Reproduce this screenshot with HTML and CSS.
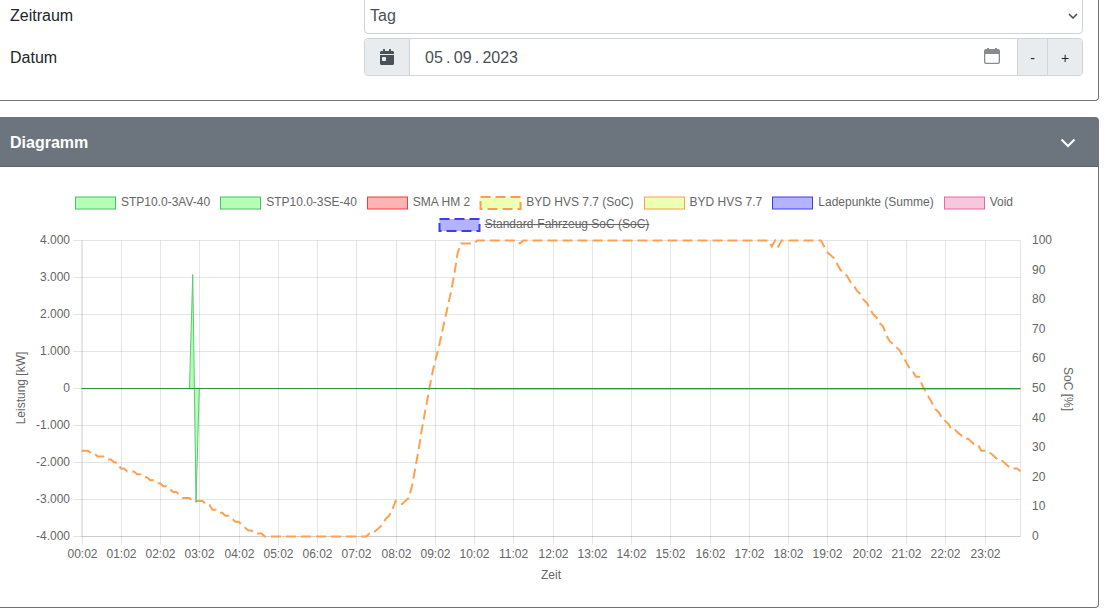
FILE: index.html
```html
<!DOCTYPE html>
<html lang="de">
<head>
    <meta charset="UTF-8">
    <meta name="viewport" content="width=device-width, initial-scale=1.0">
    <title>Diagramm</title>
    <link rel="stylesheet" href="styles.css">
</head>
<body>
    <main>
        <!-- Filter -->
        <section class="card filter">
            <div class="form-row">
                <label for="range">Zeitraum</label>
                <div class="select-wrap">
                    <select id="range">
                        <option>Tag</option>
                        <option>Monat</option>
                        <option>Jahr</option>
                    </select>
                    <svg class="select-arrow" width="10" height="6" viewBox="0 0 10 6"><path d="M1 1l4 4 4-4" fill="none" stroke="#495057" stroke-width="1.6"/></svg>
                </div>
            </div>
            <div class="form-row">
                <label for="date">Datum</label>
                <div class="input-group">
                    <span class="addon">
                        <svg width="14" height="16" viewBox="0 0 448 512"><path fill="#495057" d="M0 464c0 26.5 21.5 48 48 48h352c26.5 0 48-21.5 48-48V192H0v272zm64-192c0-8.8 7.2-16 16-16h96c8.800 0 16 7.200 16 16v96c0 8.800-7.200 16-16 16H80c-8.800 0-16-7.200-16-16v-96zM400 64h-48V16c0-8.800-7.200-16-16-16h-32c-8.800 0-16 7.200-16 16v48H160V16c0-8.800-7.200-16-16-16h-32c-8.800 0-16 7.200-16 16v48H48C21.5 64 0 85.5 0 112v48h448v-48c0-26.5-21.5-48-48-48z"/></svg>
                    </span>
                    <input type="text" id="date" value="05&#8201;.&#8201;09&#8201;.&#8201;2023">
                    <button type="button" class="picker" aria-label="Kalender">
                        <svg width="16" height="16" viewBox="0 0 16 16"><path fill="#868b90" fill-rule="evenodd" d="M3 0h2v1h6V0h2v1h1a2 2 0 0 1 2 2v11a2 2 0 0 1-2 2H2a2 2 0 0 1-2-2V3a2 2 0 0 1 2-2h1zM1.300 6v7.700a1 1 0 0 0 1 1h11.400a1 1 0 0 0 1-1V6z"/></svg>
                    </button>
                    <button type="button" class="step">-</button>
                    <button type="button" class="step plus">+</button>
                </div>
            </div>
        </section>

        <!-- Chart -->
        <section class="card">
            <header>
                <h2>Diagramm</h2>
                <button type="button" class="collapse" aria-label="Zuklappen">
                    <svg width="16" height="10" viewBox="0 0 16 10"><path d="M1.500 1.500L8 8l6.500-6.500" fill="none" stroke="#fff" stroke-width="2"/></svg>
                </button>
            </header>
            <div class="chart">
                <ul class="legend">
                    <li><svg class="green"><rect x=".5" width="40" height="12"/></svg>STP10.0-3AV-40</li>
                    <li><svg class="green"><rect x=".5" width="40" height="12"/></svg>STP10.0-3SE-40</li>
                    <li><svg class="red"><rect x=".5" width="40" height="12"/></svg>SMA HM 2</li>
                    <li><svg class="yellow dashed"><rect x=".5" width="40" height="12"/></svg>BYD HVS 7.7 (SoC)</li>
                    <li><svg class="yellow"><rect x=".5" width="40" height="12"/></svg>BYD HVS 7.7</li>
                    <li><svg class="blue"><rect x=".5" width="40" height="12"/></svg>Ladepunkte (Summe)</li>
                    <li><svg class="pink"><rect x=".5" width="40" height="12"/></svg>Void</li>
                    <li class="off"><svg class="blue dashed"><rect x=".5" width="40" height="12"/></svg><s>Standard-Fahrzeug SoC (SoC)</s></li>
                </ul>
                <svg id="plot" viewBox="0 0 1068 356"></svg>
            </div>
        </section>
    </main>
    <script src="script.js"></script>
</body>
</html>
```
FILE: styles.css
```css
* {
    margin: 0;
    padding: 0;
    box-sizing: border-box;
}

body {
    font-family: "Liberation Sans", Arial, sans-serif;
    font-size: 16px;
    line-height: 24px;
    color: #212529;
    background-color: #fff;
}

main {
    display: flex;
    flex-direction: column;
    gap: 16px;
    margin-top: -4px;
    padding-right: 9px;
}

.card {
    border: 1px solid #6c757d;
    border-left: 0;
    border-radius: 0 4px 4px 0;
}

/* Filter */
.filter {
    display: grid;
    gap: 4px;
    padding: 0 15px 24px 10px;
    border-top: 0;
}

.form-row {
    display: grid;
    grid-template-columns: 33% 1fr;
    align-items: center;
}

.form-row label {
    padding-top: 2px;
}

.select-wrap {
    position: relative;
}

select {
    display: block;
    width: 100%;
    height: 38px;
    padding: 2px 5px 0;
    font: inherit;
    color: #495057;
    background-color: #fff;
    border: 1px solid #ced4da;
    border-radius: 4px;
    appearance: none;
}

.select-arrow {
    position: absolute;
    top: 17px;
    right: 5px;
    pointer-events: none;
}

.input-group {
    display: flex;
    height: 38px;
    border: 1px solid #ced4da;
    border-radius: 4px;
    overflow: hidden;
}

.addon {
    display: flex;
    align-items: center;
    justify-content: center;
    width: 45px;
    background-color: #e9ecef;
    border-right: 1px solid #ced4da;
}

input {
    flex: 1;
    min-width: 0;
    padding: 2px 15px 0;
    border: 0;
    font: inherit;
    color: #495057;
}

button {
    border: 0;
    background: none;
    cursor: pointer;
}

.picker {
    width: 50px;
    padding-bottom: 3px;
}

.picker svg {
    display: block;
    margin: 0 auto;
}

.step {
    width: 30px;
    padding-top: 2px;
    font: inherit;
    font-size: 14px;
    color: #212529;
    background-color: #e9ecef;
    border-left: 1px solid #ced4da;
}

.plus {
    width: 35px;
}

/* Chart */
.card header {
    display: flex;
    align-items: center;
    justify-content: space-between;
    height: 49px;
    padding: 2px 22px 0 10px;
    color: #fff;
    background-color: #6c757d;
    border-bottom: 1px solid #5b656e;
}

h2 {
    font-size: 16px;
}

.collapse svg {
    display: block;
}

.chart {
    padding: 20px 20px 20px 10px;
}

.legend {
    display: flex;
    flex-wrap: wrap;
    justify-content: center;
    gap: 10px;
    height: 44px;
    padding: 10px 64px 0;
    list-style: none;
    font-size: 12px;
    line-height: 10px;
    color: #666;
}

.legend li {
    display: flex;
    gap: 6px;
    white-space: nowrap;
}

.legend svg {
    width: 40px;
    height: 12px;
    overflow: visible;
}

.legend .dashed {
    stroke-width: 2;
    stroke-dasharray: 10 5;
}

.green {
    fill: #b5ffb5;
    stroke: #4fbf67;
}

.red {
    fill: #ffb3b3;
    stroke: #f03c3c;
}

.yellow {
    fill: #ecffb3;
    stroke: #ff9b4b;
}

.blue {
    fill: #b3b3ff;
    stroke: #3c3cf5;
}

.pink {
    fill: #f8c6dd;
    stroke: #e76aa5;
}

#plot {
    display: block;
    width: 100%;
    height: auto;
    overflow: visible;
    font-size: 12px;
    fill: #666;
}

.grid {
    stroke: #000;
    stroke-opacity: 0.1;
}

.soc {
    fill: none;
    stroke: #ffa050;
    stroke-width: 2;
    stroke-dasharray: 10 5;
}

.power {
    fill: #b5ffb5;
    stroke: #5cc873;
}

.zero {
    stroke: #2f9440;
}

.zero-shade {
    stroke: #d97070;
    stroke-opacity: 0.5;
}
```
FILE: script.js
```js
const plot = document.getElementById("plot");

// Plot area inside the viewBox
const left = 71.5;
const right = 1010.5;
const top0 = 9.5;
const bottom = 305.5;

// One value every 5 minutes, 00:02 to 23:57
const steps = 287;

const xPos = step => left + step * (right - left) / steps;
const socPos = value => bottom - value * (bottom - top0) / 100;
const powerPos = value => (top0 + bottom) / 2 - value * (bottom - top0) / 8000;

// [step, state of charge]
const soc = [
    [0, 29], [2, 29], [3, 28], [4, 28], [5, 27], [7, 27], [8, 26], [9, 26], [10, 25], [11, 25], [12, 23], [13, 23],
    [14, 22], [16, 22], [17, 21], [18, 21], [19, 20], [20, 20], [21, 19], [22, 19], [23, 18], [24, 18],
    [25, 17], [26, 17], [27, 16], [28, 15], [29, 15], [30, 14], [31, 13], [33, 13], [34, 12], [37, 12],
    [38, 11], [39, 11], [40, 9], [41, 9], [42, 8], [43, 8], [44, 7], [45, 7], [46, 6], [47, 5], [48, 5],
    [49, 4], [50, 3], [51, 2], [52, 2], [53, 1], [55, 1], [56, 0], [87, 0], [88, 1], [89, 1], [90, 2], [91, 3],
    [92, 4], [93, 6], [94, 7], [95, 9], [96, 12], [97, 11], [98, 11], [99, 12], [100, 13], [101, 17],
    [102, 23], [103, 29], [104, 36], [105, 42], [106, 48], [107, 54], [108, 59], [109, 63], [110, 68],
    [111, 73], [112, 78], [113, 83], [114, 89], [115, 96], [116, 99], [120, 99], [121, 100], [133, 100],
    [134, 99], [135, 100], [210, 100], [211, 98], [212, 100], [213, 98], [214, 100], [226, 100],
    [227, 98], [228, 96], [230, 94], [231, 92], [232, 90], [233, 89], [234, 88], [235, 86], [236, 85],
    [237, 83], [238, 82], [239, 80], [240, 79], [241, 77], [242, 75], [243, 74], [244, 72], [245, 71],
    [246, 68], [247, 66], [248, 65], [249, 64], [250, 63], [251, 61], [252, 59], [253, 57], [254, 56],
    [255, 54], [256, 54], [257, 51], [258, 49], [259, 47], [260, 45], [261, 43], [262, 42], [263, 40],
    [264, 39], [265, 38], [266, 36], [267, 36], [268, 35], [269, 34], [270, 33], [271, 33], [272, 32],
    [273, 31], [274, 31], [275, 29], [277, 29], [278, 28], [279, 27], [280, 26], [281, 26], [282, 25],
    [283, 24], [284, 23], [286, 23], [287, 22]
];

// [step, power]
const power = [[33, 0], [34, 3080], [35, -3080], [36, 0]];

function add(name, attrs, text) {
    const el = document.createElementNS("http://www.w3.org/2000/svg", name);
    for (const key in attrs) {
        el.setAttribute(key, attrs[key]);
    }
    if (text !== undefined) {
        el.textContent = text;
    }
    plot.appendChild(el);
}

function line(x1, y1, x2, y2, cls) {
    add("line", { x1, y1, x2, y2, class: cls });
}

function points(data, yPos) {
    return data.map(([step, value]) => xPos(step) + "," + yPos(value)).join(" ");
}

// Time axis
for (let hour = 0; hour < 24; hour++) {
    const x = Math.round(xPos(hour * 12)) + 0.5;
    line(x, top0, x, bottom + 8, "grid");
    add("text", { x: x, y: 327, "text-anchor": "middle" }, String(hour).padStart(2, "0") + ":02");
}
line(left, top0, left, bottom, "grid");
line(right, top0, right, bottom, "grid");
line(left, bottom, right, bottom, "grid");

// Power axis
for (let value = -4000; value <= 4000; value += 1000) {
    const y = powerPos(value);
    line(left - 8, y, right, y, "grid");
    add("text", { x: 60, y: y + 3.5, "text-anchor": "end" }, value ? value / 1000 + ".000" : "0");
}

// SoC axis
for (let value = 0; value <= 100; value += 10) {
    add("text", { x: 1022, y: Math.round(socPos(value) + 3.5) }, value);
}

// Axis titles
add("text", { x: 541, y: 348, "text-anchor": "middle" }, "Zeit");
add("text", { transform: "translate(15 157) rotate(-90)", "text-anchor": "middle" }, "Leistung [kW]");
add("text", { transform: "translate(1054 158) rotate(90)", "text-anchor": "middle" }, "SoC [%]");

// Series
add("polyline", { points: points(soc, socPos), class: "soc" });
add("polyline", { points: points(power, powerPos), class: "power" });
line(left + 390, powerPos(0) + 1, right, powerPos(0) + 1, "zero-shade");
line(left, powerPos(0), right, powerPos(0), "zero");
```
